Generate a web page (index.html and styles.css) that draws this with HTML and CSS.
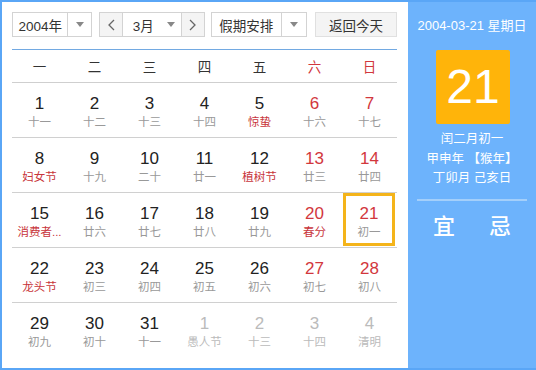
FILE: index.html
```html
<!DOCTYPE html>
<html lang="zh">
<head>
<meta charset="utf-8">
<link rel="stylesheet" href="styles.css">
</head>
<body>
<div class="cal">
  <div class="main">
    <div class="toolbar">
      <div class="sel sel-year"><span class="sel-text">2004年</span><span class="sel-arrow"><i class="tri"></i></span></div>
      <div class="sel sel-month">
        <span class="nav"><svg width="8" height="12" viewBox="0 0 8 12"><path d="M7 1 L2 6 L7 11" fill="none" stroke="#666" stroke-width="1.3"/></svg></span>
        <span class="sel-text">3月</span><span class="sel-arrow plain"><i class="tri"></i></span>
        <span class="nav right"><svg width="8" height="12" viewBox="0 0 8 12"><path d="M1 1 L6 6 L1 11" fill="none" stroke="#666" stroke-width="1.3"/></svg></span>
      </div>
      <div class="sel sel-hol"><span class="sel-text">假期安排</span><span class="sel-arrow"><i class="tri"></i></span></div>
      <div class="btn-today">返回今天</div>
    </div>
    <div class="weekdays">
      <span>一</span><span>二</span><span>三</span><span>四</span><span>五</span><span class="red">六</span><span class="red">日</span>
    </div>
    <div class="grid">
      <div class="row">
        <div class="cell"><b>1</b><em>十一</em></div>
        <div class="cell"><b>2</b><em>十二</em></div>
        <div class="cell"><b>3</b><em>十三</em></div>
        <div class="cell"><b>4</b><em>十四</em></div>
        <div class="cell"><b>5</b><em class="fest">惊蛰</em></div>
        <div class="cell wk"><b>6</b><em>十六</em></div>
        <div class="cell wk"><b>7</b><em>十七</em></div>
      </div>
      <div class="row">
        <div class="cell"><b>8</b><em class="fest">妇女节</em></div>
        <div class="cell"><b>9</b><em>十九</em></div>
        <div class="cell"><b>10</b><em>二十</em></div>
        <div class="cell"><b>11</b><em>廿一</em></div>
        <div class="cell"><b>12</b><em class="fest">植树节</em></div>
        <div class="cell wk"><b>13</b><em>廿三</em></div>
        <div class="cell wk"><b>14</b><em>廿四</em></div>
      </div>
      <div class="row">
        <div class="cell"><b>15</b><em class="fest">消费者...</em></div>
        <div class="cell"><b>16</b><em>廿六</em></div>
        <div class="cell"><b>17</b><em>廿七</em></div>
        <div class="cell"><b>18</b><em>廿八</em></div>
        <div class="cell"><b>19</b><em>廿九</em></div>
        <div class="cell wk"><b>20</b><em class="fest">春分</em></div>
        <div class="cell wk today"><b>21</b><em>初一</em></div>
      </div>
      <div class="row">
        <div class="cell"><b>22</b><em class="fest">龙头节</em></div>
        <div class="cell"><b>23</b><em>初三</em></div>
        <div class="cell"><b>24</b><em>初四</em></div>
        <div class="cell"><b>25</b><em>初五</em></div>
        <div class="cell"><b>26</b><em>初六</em></div>
        <div class="cell wk"><b>27</b><em>初七</em></div>
        <div class="cell wk"><b>28</b><em>初八</em></div>
      </div>
      <div class="row last">
        <div class="cell"><b>29</b><em>初九</em></div>
        <div class="cell"><b>30</b><em>初十</em></div>
        <div class="cell"><b>31</b><em>十一</em></div>
        <div class="cell other"><b>1</b><em>愚人节</em></div>
        <div class="cell other"><b>2</b><em>十三</em></div>
        <div class="cell other"><b>3</b><em>十四</em></div>
        <div class="cell other"><b>4</b><em>清明</em></div>
      </div>
    </div>
  </div>
  <div class="side">
    <div class="side-date">2004-03-21 星期日</div>
    <div class="big-day">21</div>
    <div class="lunar">
      <div>闰二月初一</div>
      <div>甲申年 【猴年】</div>
      <div>丁卯月 己亥日</div>
    </div>
    <div class="yiji"><span>宜</span><span>忌</span></div>
  </div>
</div>
</body>
</html>
```

FILE: styles.css
```css
html, body {
  margin: 0;
  padding: 0;
  background: #fff;
}
body {
  font-family: "Liberation Sans", "Noto Sans CJK SC", sans-serif;
  color: #333;
}
.cal {
  width: 536px;
  height: 370px;
  box-sizing: border-box;
  border: 2px solid #5aa6f6;
  border-right: none;
  display: flex;
  background: #6db3fc;
}
.main {
  width: 406px;
  flex: none;
  background: #fff;
  box-sizing: border-box;
  padding: 10px 11px 0 10px;
}
.toolbar {
  display: flex;
  height: 25px;
  gap: 7px;
}
.sel {
  display: flex;
  box-sizing: border-box;
  height: 25px;
  border: 1px solid #d3d3d3;
  background: #fff;
  font-size: 13.5px;
  color: #333;
}
.sel-text {
  display: flex;
  align-items: center;
  justify-content: center;
}
.sel-arrow {
  display: flex;
  align-items: center;
  justify-content: center;
  border-left: 1px solid #d3d3d3;
  width: 23px;
}
.sel-arrow.plain {
  border-left: none;
}
.tri {
  width: 0;
  height: 0;
  border-left: 4px solid transparent;
  border-right: 4px solid transparent;
  border-top: 5px solid #888;
}
.sel-year {
  width: 80px;
}
.sel-year .sel-text {
  width: 55px;
}
.sel-month {
  width: 106px;
}
.nav {
  width: 22px;
  display: flex;
  align-items: center;
  justify-content: center;
  background: #f4f4f4;
  border-right: 1px solid #d3d3d3;
}
.nav.right {
  border-right: none;
  border-left: 1px solid #d3d3d3;
}
.sel-month .sel-text {
  width: 34px;
  margin-left: 4px;
}
.sel-month .sel-arrow {
  width: 22px;
}
.sel-hol {
  width: 96px;
  margin-left: -1px;
}
.sel-hol .sel-text {
  width: 70px;
}
.sel-hol .sel-arrow {
  width: 25px;
}
.btn-today {
  margin-left: 1px;
  width: 82px;
  height: 25px;
  box-sizing: border-box;
  border: 1px solid #e0e0e0;
  background: #f4f4f4;
  font-size: 13.5px;
  color: #333;
  display: flex;
  align-items: center;
  justify-content: center;
}
.weekdays {
  margin-top: 12px;
  border-top: 1px solid #72a9e2;
  border-bottom: 1px solid #cfcfcf;
  height: 32px;
  display: grid;
  grid-template-columns: repeat(7, 55px);
  font-size: 13.5px;
  align-items: center;
  text-align: center;
  width: 385px;
}
.red {
  color: #d2373d;
}
.grid {
  width: 385px;
}
.row {
  display: grid;
  grid-template-columns: repeat(7, 55px);
  height: 55px;
  border-bottom: 1px solid #d0d0d0;
  box-sizing: border-box;
}
.row.last {
  border-bottom: none;
}
.cell {
  display: flex;
  flex-direction: column;
  align-items: center;
  padding-top: 10px;
  box-sizing: border-box;
}
.cell b {
  font-weight: normal;
  font-size: 17px;
  line-height: 21px;
  color: #222;
}
.cell em {
  font-style: normal;
  font-size: 11.5px;
  line-height: 16px;
  color: #999;
}
.cell em.fest {
  color: #c8353b;
}
.cell.wk b {
  color: #d2373d;
}
.cell.other b,
.cell.other em {
  color: #bbb;
}
.cell.today {
  border: 3px solid #f4b41a;
  margin: 0 2px 1px 1px;
  padding-top: 7px;
}
.side {
  flex: 1;
  display: flex;
  flex-direction: column;
  align-items: center;
  color: #fff;
  padding-top: 15px;
}
.side-date {
  font-size: 13px;
  line-height: 18px;
}
.big-day {
  margin-top: 15px;
  width: 74px;
  height: 74px;
  background: #ffb40a;
  border-radius: 2px;
  font-size: 48px;
  line-height: 74px;
  text-align: center;
  margin-left: 2px;
}
.lunar {
  margin-top: 6px;
  font-size: 12.5px;
  line-height: 19.5px;
  text-align: center;
  width: 110px;
  padding-bottom: 10px;
  border-bottom: 2px solid #a4cffa;
}
.yiji {
  display: flex;
  gap: 34px;
  margin-top: 11px;
  font-size: 22px;
  line-height: 30px;
  font-weight: 500;
}
```
